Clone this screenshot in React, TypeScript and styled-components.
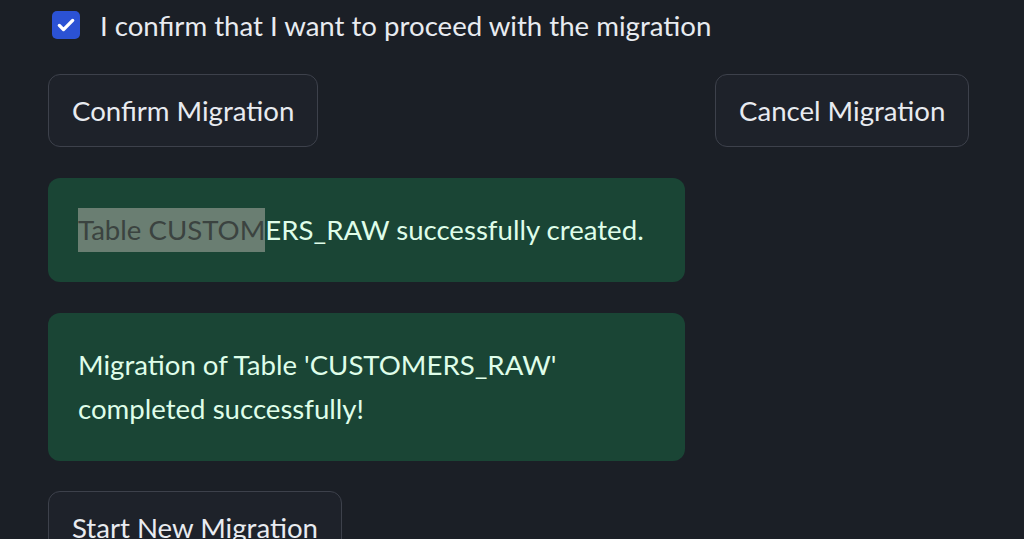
import styled, { createGlobalStyle } from "styled-components";

const GlobalStyle = createGlobalStyle`
  body {
    margin: 0;
    background: #1b1f26;
    font-family: Lato, "Open Sans", sans-serif;
    color: #f0f2f6;
  }
`;

const Page = styled("main")`
  display: flex;
  flex-direction: column;
  padding: 11px 48px 0 48px;
  height: 539px;
  box-sizing: border-box;
  overflow: hidden;
`;

const CheckRow = styled("label")`
  display: flex;
  align-items: center;
  gap: 20px;
  height: 28px;
  font-size: 27.6px;
  color: #e8ebf0;
`;

const Box = styled("span")`
  width: 28px;
  height: 28px;
  border-radius: 5px;
  background: #2b52d4;
  display: flex;
  align-items: center;
  justify-content: center;
  margin-left: 4px;
`;

const ButtonRow = styled("div")`
  display: grid;
  grid-template-columns: 637px 1fr;
  column-gap: 30px;
  margin-top: 35px;
  align-items: start;
`;

const Button = styled("button")`
  justify-self: start;
  align-self: flex-start;
  height: 73px;
  padding: 0 23px;
  border: 1px solid #3d414b;
  border-radius: 12px;
  background: #1e222a;
  color: #e8ebf0;
  font-family: inherit;
  font-size: 27.6px;
`;

const Stack = styled("div")<{ $top: number }>`
  display: flex;
  flex-direction: column;
  gap: 31px;
  width: 637px;
  margin-top: ${(p) => p.$top}px;
`;

const Alert = styled("div")`
  background: #1a4535;
  border-radius: 12px;
  padding: 30px 30px;
  font-size: 27.6px;
  line-height: 44px;
  color: #dffde9;
`;

const Selected = styled("span")`
  display: inline-block;
  background: #6a7e72;
  color: #3b4340;
`;

export default function App() {
  return (
    <>
      <GlobalStyle />
      <Page>
        <CheckRow>
          <Box>
            <svg width="20" height="20" viewBox="0 0 24 24" fill="none">
              <path d="M4 12.5l5 5L20 6.5" stroke="#fff" strokeWidth="4" strokeLinecap="round" strokeLinejoin="round" />
            </svg>
          </Box>
          I confirm that I want to proceed with the migration
        </CheckRow>
        <ButtonRow>
          <Button>Confirm Migration</Button>
          <Button>Cancel Migration</Button>
        </ButtonRow>
        <Stack $top={31}>
          <Alert>
            <Selected>Table CUSTOM</Selected>ERS_RAW successfully created.
          </Alert>
          <Alert>
            Migration of Table 'CUSTOMERS_RAW'
            <br />
            completed successfully!
          </Alert>
        </Stack>
        <Stack $top={30}>
          <Button>Start New Migration</Button>
        </Stack>
      </Page>
    </>
  );
}
